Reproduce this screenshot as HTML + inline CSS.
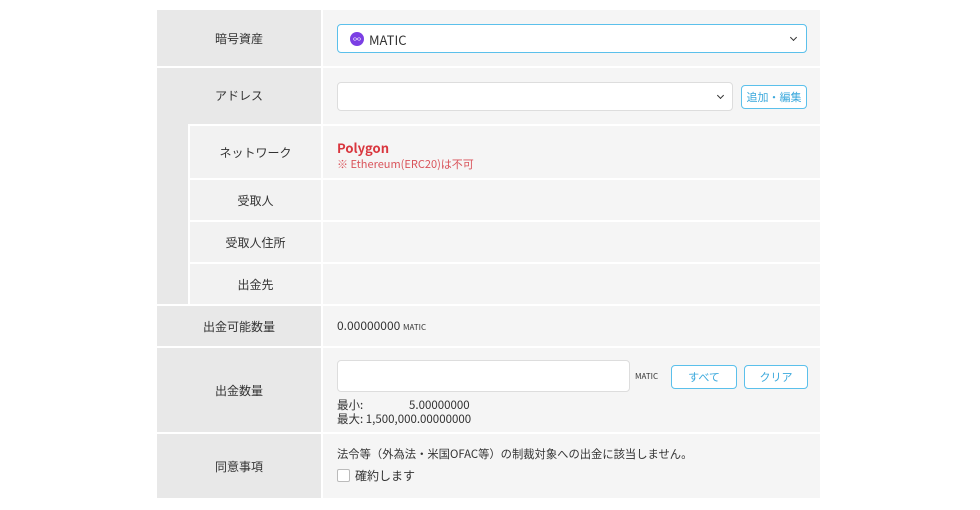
<!DOCTYPE html>
<html><head><meta charset="utf-8"><style>
body{margin:0;background:#fff;font-family:"Noto Sans CJK JP",sans-serif;font-size:12px;color:#333;}
.r{position:absolute;}
.l{background:#e8e8e8;display:flex;align-items:center;justify-content:center;}
.v{background:#f5f5f5;}
.s{background:#f2f2f2;display:flex;align-items:center;justify-content:center;}
.box{position:absolute;background:#fff;border:1px solid #ddd;border-radius:4px;box-sizing:border-box;}
.btn{position:absolute;border:1px solid #5bc0eb;border-radius:4px;color:#3aa8dc;background:#fff;box-sizing:border-box;display:flex;align-items:center;justify-content:center;font-size:11px;}
.t{position:absolute;white-space:nowrap;}
.chev{position:absolute;width:4px;height:4px;border-right:1.5px solid #333;border-bottom:1.5px solid #333;transform:rotate(45deg);}
</style></head><body>
<div class="r l" style="left:157px;top:10px;width:164px;height:56px">暗号資産</div>
<div class="r v" style="left:323px;top:10px;width:497px;height:56px"></div>
<div class="box" style="left:337px;top:24px;width:470px;height:29px;border-color:#5bc0eb;border-width:1.5px"></div>
<div class="r" style="left:350px;top:32px;width:14px;height:14px;border-radius:50%;background:#7b3fe4;color:#fff;font-size:8px;display:flex;align-items:center;justify-content:center">∞</div>
<div class="t" style="left:369px;top:30px;font-size:13px">MATIC</div>
<div class="chev" style="left:791px;top:35px"></div>
<div class="r l" style="left:157px;top:68px;width:164px;height:56px;align-items:flex-start;padding-top:19px;box-sizing:border-box">アドレス</div>
<div class="r v" style="left:323px;top:68px;width:497px;height:56px"></div>
<div class="box" style="left:337px;top:82px;width:396px;height:29px"></div>
<div class="chev" style="left:718px;top:93px"></div>
<div class="btn" style="left:741px;top:85px;width:66px;height:24px">追加・編集</div>
<div class="r" style="left:157px;top:124px;width:31px;height:180px;background:#e8e8e8"></div>
<div class="r s" style="left:190px;top:126px;width:131px;height:52px">ネットワーク</div>
<div class="r v" style="left:323px;top:126px;width:497px;height:52px"></div>
<div class="t" style="left:337px;top:138px;font-size:13px;font-weight:bold;color:#d9363e">Polygon</div>
<div class="t" style="left:337px;top:156px;font-size:11px;color:#d9535a">※ Ethereum(ERC20)は不可</div>
<div class="r s" style="left:190px;top:180px;width:131px;height:40px">受取人</div>
<div class="r v" style="left:323px;top:180px;width:497px;height:40px"></div>
<div class="r s" style="left:190px;top:222px;width:131px;height:40px">受取人住所</div>
<div class="r v" style="left:323px;top:222px;width:497px;height:40px"></div>
<div class="r s" style="left:190px;top:264px;width:131px;height:40px">出金先</div>
<div class="r v" style="left:323px;top:264px;width:497px;height:40px"></div>
<div class="r l" style="left:157px;top:306px;width:164px;height:40px">出金可能数量</div>
<div class="r v" style="left:323px;top:306px;width:497px;height:40px"></div>
<div class="t" style="left:337px;top:317px">0.00000000 <span style="font-size:8px">MATIC</span></div>
<div class="r l" style="left:157px;top:348px;width:164px;height:84px">出金数量</div>
<div class="r v" style="left:323px;top:348px;width:497px;height:84px"></div>
<div class="box" style="left:337px;top:360px;width:293px;height:32px"></div>
<div class="t" style="left:635px;top:371px;font-size:8px">MATIC</div>
<div class="btn" style="left:671px;top:365px;width:66px;height:24px">すべて</div>
<div class="btn" style="left:744px;top:365px;width:64px;height:24px">クリア</div>
<div class="t" style="left:337px;top:398px;line-height:14px;font-size:11.5px">最小:<span style="position:absolute;left:72px">5.00000000</span><br>最大: 1,500,000.00000000</div>
<div class="r l" style="left:157px;top:434px;width:164px;height:64px">同意事項</div>
<div class="r v" style="left:323px;top:434px;width:497px;height:64px"></div>
<div class="t" style="left:337px;top:446px;font-size:11.3px">法令等（外為法・米国OFAC等）の制裁対象への出金に該当しません。</div>
<div class="box" style="left:337px;top:469px;width:13px;height:13px;border-color:#bbb;border-radius:2px"></div>
<div class="t" style="left:355px;top:467px">確約します</div>
</body></html>
